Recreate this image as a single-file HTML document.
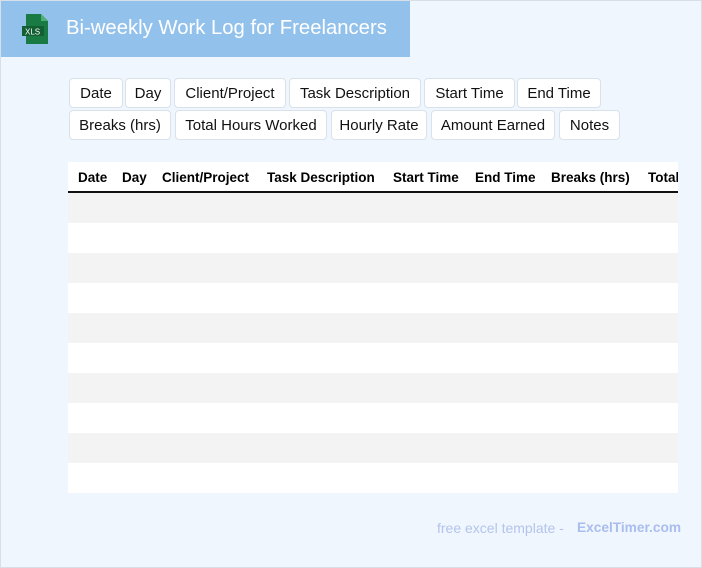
<!DOCTYPE html>
<html><head><style>
*{box-sizing:border-box;margin:0;padding:0}
body{width:702px;height:568px;background:#f0f6fe;font-family:"Liberation Sans",Arial,sans-serif;position:relative;overflow:hidden}
.frame{position:absolute;left:0;top:0;width:702px;height:568px;border:1px solid #d8dfe8;pointer-events:none}
.hdr{position:absolute;left:0;top:0;width:410px;height:57px;background:#92c1ec}
.hdr h1{position:absolute;left:66px;top:17px;font-size:20.3px;font-weight:normal;color:#fff;white-space:nowrap}
.btn{position:absolute;height:30px;background:#fff;border:1px solid #d9e1ea;border-radius:4px;font-size:15px;color:#111;text-align:center;line-height:30px;white-space:nowrap}
.tbl{position:absolute;left:68px;top:162px;width:610px;height:331px;background:#fff;overflow:hidden}
.th{position:absolute;top:0;height:31px;border-bottom:2px solid #111;width:610px}
.th span{position:absolute;top:8px;font-size:13.5px;font-weight:bold;color:#000;white-space:nowrap}
.row{position:absolute;left:0;width:610px;height:30px}
.g{background:#f3f3f3}
.ft{position:absolute;top:520px;font-size:14px;white-space:nowrap}
</style></head><body>
<div class="hdr">
<svg style="position:absolute;left:22px;top:14px" width="28" height="30" viewBox="0 0 28 30">
<path d="M4 0h15l7 7v23H4z" fill="#1a7a43"/><path d="M19 0v7h7z" fill="#4fae74"/>
<rect x="0" y="12" width="22" height="10" fill="#125f33"/>
<text x="3" y="20.5" font-size="8" fill="#fff" font-family="Liberation Sans">XLS</text></svg>
<h1>Bi-weekly Work Log for Freelancers</h1>
</div>
<div class="btn" style="left:69px;top:78px;width:54px">Date</div>
<div class="btn" style="left:125px;top:78px;width:46px">Day</div>
<div class="btn" style="left:174px;top:78px;width:112px">Client/Project</div>
<div class="btn" style="left:289px;top:78px;width:132px">Task Description</div>
<div class="btn" style="left:424px;top:78px;width:91px">Start Time</div>
<div class="btn" style="left:517px;top:78px;width:84px">End Time</div>
<div class="btn" style="left:69px;top:110px;width:102px">Breaks (hrs)</div>
<div class="btn" style="left:175px;top:110px;width:152px">Total Hours Worked</div>
<div class="btn" style="left:331px;top:110px;width:96px">Hourly Rate</div>
<div class="btn" style="left:431px;top:110px;width:124px">Amount Earned</div>
<div class="btn" style="left:559px;top:110px;width:61px">Notes</div>
<div class="tbl">
<div class="th"><span style="left:10px">Date</span><span style="left:54px">Day</span><span style="left:94px">Client/Project</span><span style="left:199px">Task Description</span><span style="left:325px">Start Time</span><span style="left:407px">End Time</span><span style="left:483px">Breaks (hrs)</span><span style="left:580px">Total Hours Worked</span></div>
<div class="row g" style="top:31px"></div>
<div class="row g" style="top:91px"></div>
<div class="row g" style="top:151px"></div>
<div class="row g" style="top:211px"></div>
<div class="row g" style="top:271px"></div>
</div>
<div class="ft" style="left:437px;color:#b3c4ec">free excel template -</div>
<div class="ft" style="left:577px;color:#a9bdee;font-weight:bold;font-size:13.7px">ExcelTimer.com</div>
<div class="frame"></div>
</body></html>
